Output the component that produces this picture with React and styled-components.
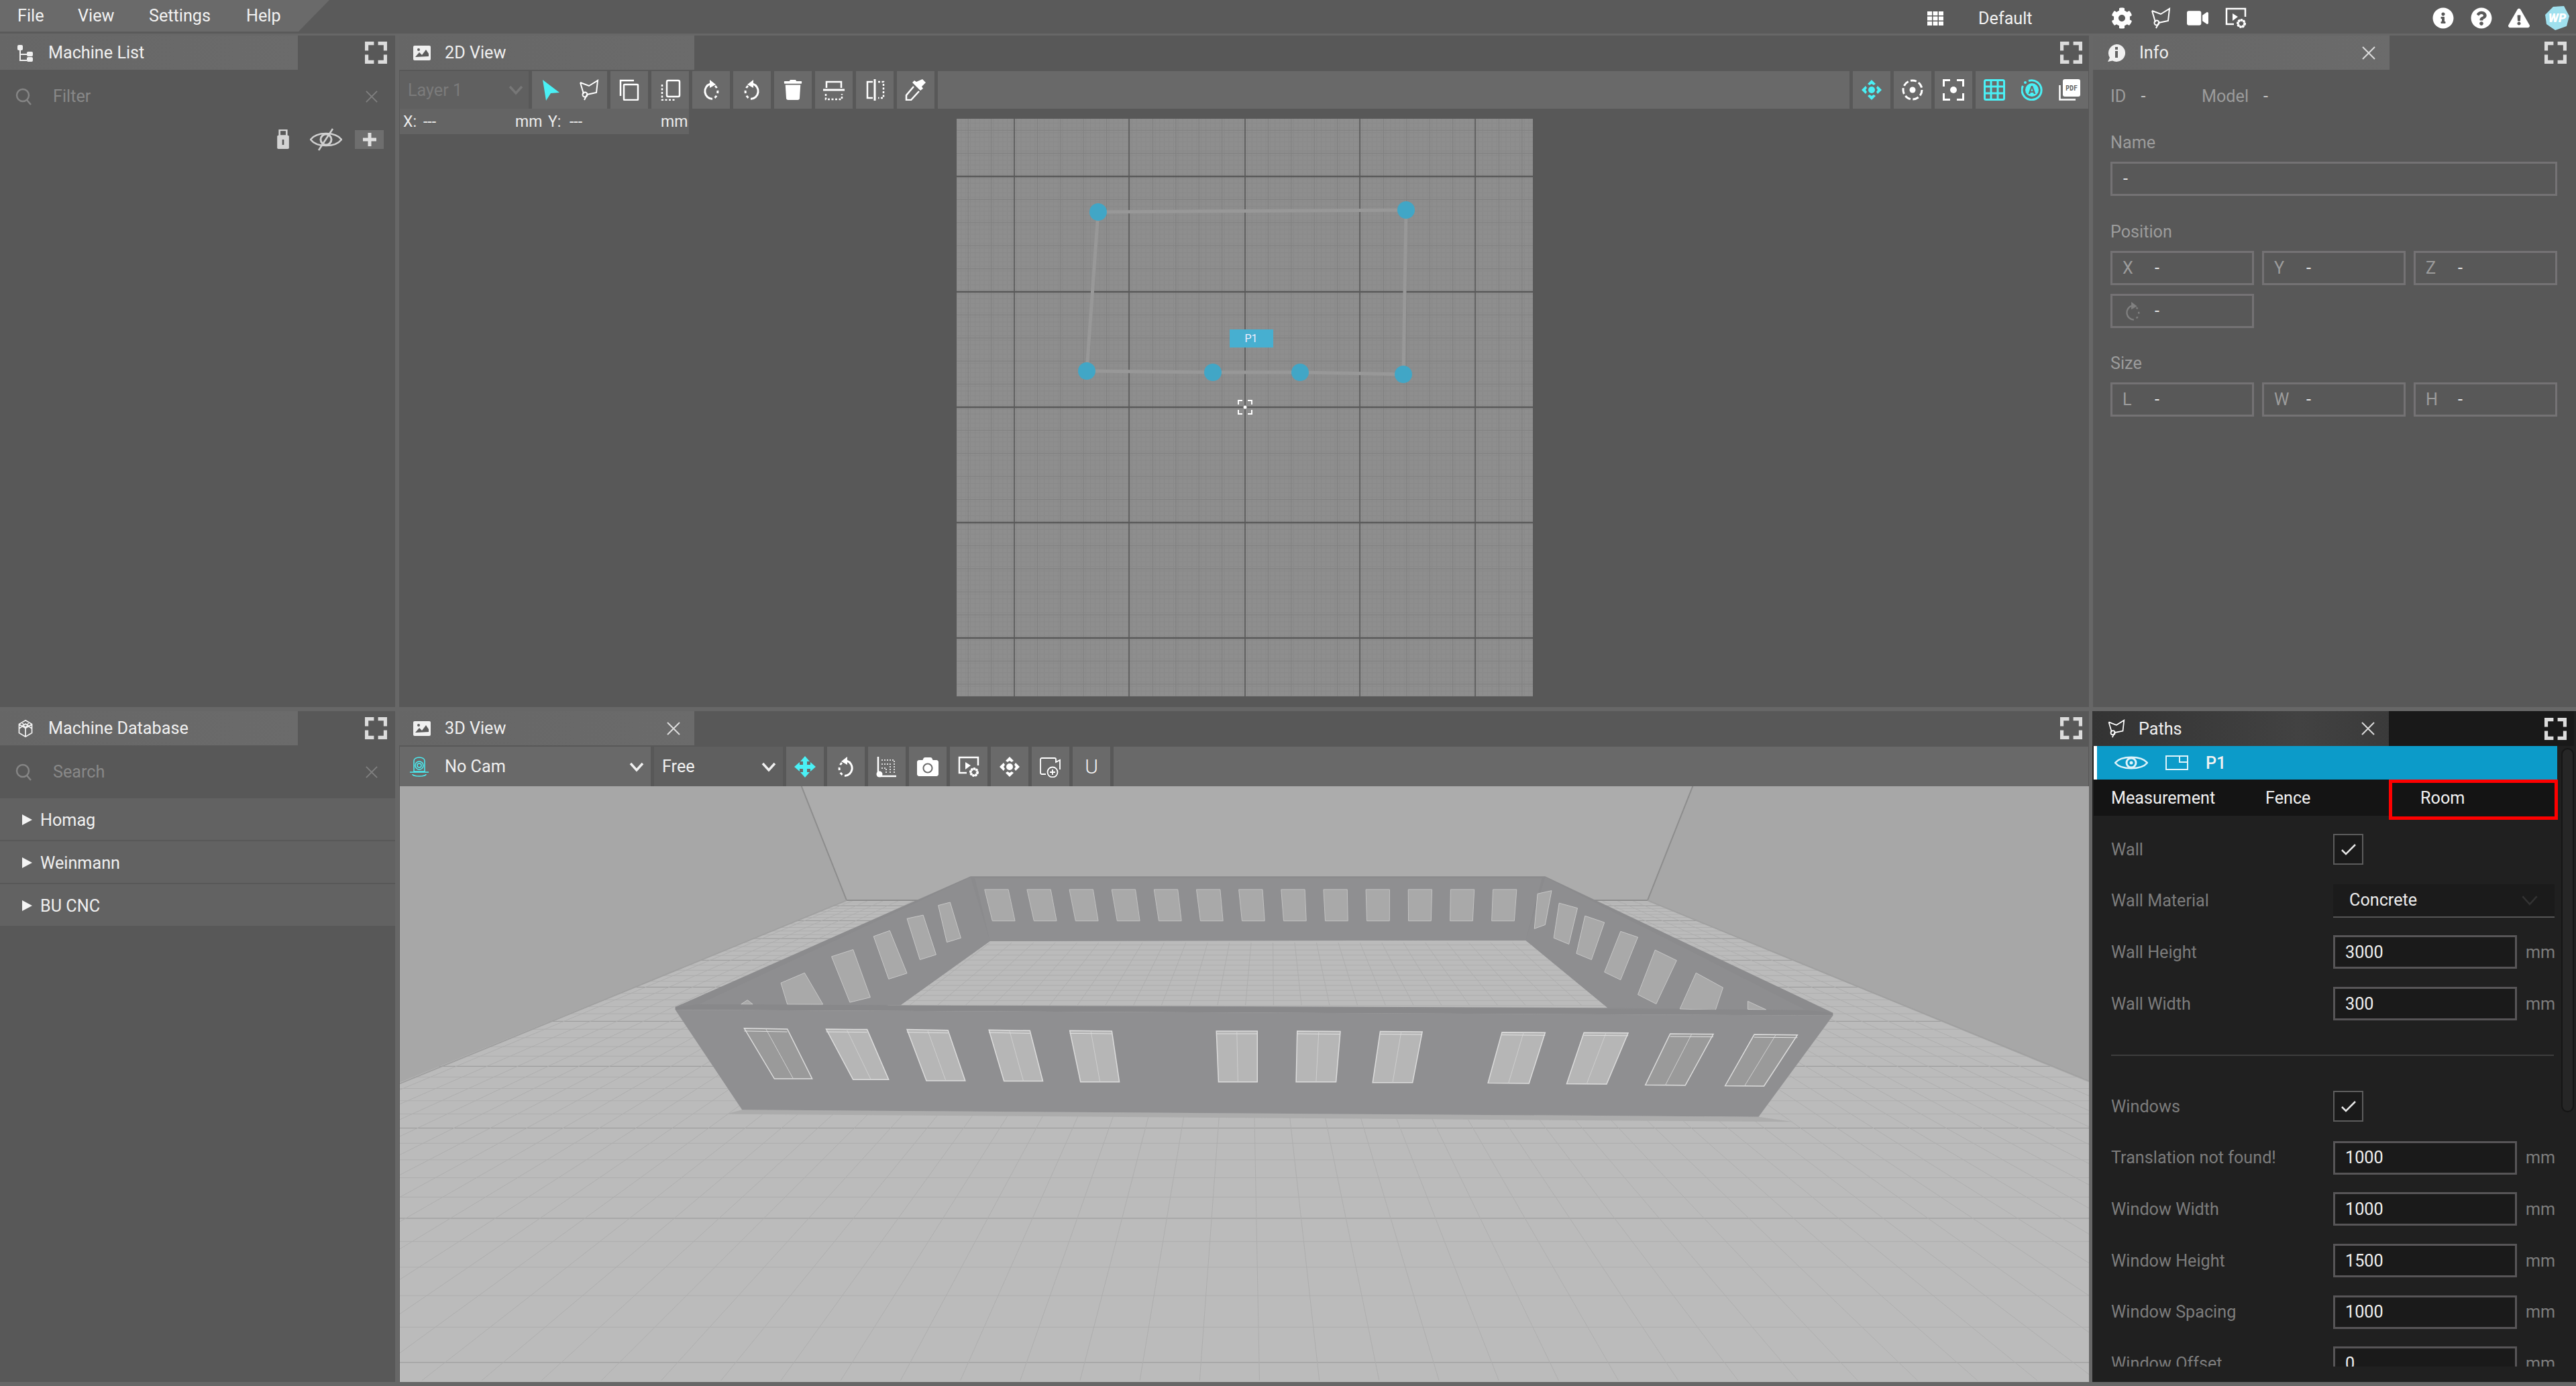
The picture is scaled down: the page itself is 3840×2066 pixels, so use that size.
import React from 'react';
import styled, {createGlobalStyle} from 'styled-components';
import {FaCog, FaVideo, FaCamera, FaInfoCircle, FaQuestionCircle, FaExclamationTriangle, FaTrash} from 'react-icons/fa';

const GlobalStyle = createGlobalStyle`
	html, body {
		margin: 0;
		padding: 0;
		background: #585858;
	}
	* {
		box-sizing: border-box;
	}
	body {
		font-family: Roboto, 'Liberation Sans', sans-serif;
		font-size: 25.2px;
		color: #e6e6e6;
		overflow: hidden;
	}
`;

const CYAN = '#4af0f5';

function Svg({size = 32, color = '#fff', children, vb = '0 0 32 32'}) {
	return (
		<IconSvg viewBox={vb} $size={size} $color={color}>
			{children}
		</IconSvg>
	);
}

function Fullscreen() {
	return (
		<Svg size={33} color="#dcdcdc">
			<path d="M2.5 13V2.5H13M19 2.5h10.5V13M2.5 19v10.5H13M29.5 19v10.5H19" fill="none" stroke="currentColor" strokeWidth="5" />
		</Svg>
	);
}

function CloseX({size = 20, color = '#dcdcdc'}) {
	return (
		<Svg size={size} color={color} vb="0 0 20 20">
			<path d="M1 1l18 18M19 1L1 19" stroke="currentColor" strokeWidth="2" fill="none" />
		</Svg>
	);
}

function SearchGlass() {
	return (
		<Svg size={26} color="#858585" vb="0 0 26 26">
			<circle cx="11" cy="11" r="9" fill="none" stroke="currentColor" strokeWidth="2.5" />
			<path d="M17 18l6 7" stroke="currentColor" strokeWidth="2.5" />
		</Svg>
	);
}

function TreeIcon() {
	return (
		<Svg size={26} color="#f0f0f0" vb="0 0 26 26">
			<path d="M5 8v16h10M5 15h10" fill="none" stroke="currentColor" strokeWidth="2" />
			<rect x="1" y="1" width="8" height="8" rx="2" fill="currentColor" />
			<rect x="15" y="11" width="9" height="7" rx="2" fill="currentColor" />
			<rect x="15" y="19" width="9" height="7" rx="2" fill="currentColor" />
		</Svg>
	);
}

function ImageIcon() {
	return (
		<Svg size={26} color="#f0f0f0" vb="0 0 26 26">
			<rect x="0" y="2" width="26" height="22" rx="2" fill="currentColor" />
			<path d="M3 19l6-7 4 4 6-8 4 6v4z" fill="#5c5c5c" />
			<circle cx="8" cy="8" r="2" fill="#5c5c5c" />
		</Svg>
	);
}

function ChatInfoIcon() {
	return (
		<Svg size={28} color="#f0f0f0" vb="0 0 28 28">
			<path d="M14 1a13 13 0 1 1-6 24.5L1 27l3-6A13 13 0 0 1 14 1z" fill="currentColor" />
			<rect x="12" y="11" width="4" height="10" fill="#626262" />
			<rect x="12" y="5" width="4" height="4" fill="#626262" />
		</Svg>
	);
}

function CubeIcon() {
	return (
		<Svg size={26} color="#f0f0f0" vb="0 0 26 30">
			<path d="M13 1l11 6.5v15L13 29 2 22.5v-15zM2 7.500l11 7 11-7M13 14.500V29M7 4l6 10 6-10M2 15l11-8 11 8" fill="none" stroke="currentColor" strokeWidth="2" />
		</Svg>
	);
}

function PathIcon({color = '#fff', size = 32}) {
	return (
		<Svg size={size} color={color}>
			<path d="M4 5l13 5 13-8-2 18-14 3-4 8M4 5l5 17" fill="none" stroke="currentColor" strokeWidth="2" />
			<circle cx="11" cy="23" r="3.500" fill="none" stroke="currentColor" strokeWidth="2" />
		</Svg>
	);
}

const ToolIcons = {
	arrow: () => (
		<Svg color={CYAN}>
			<path d="M4 1l25 19-13 1-7 11z" fill="currentColor" />
		</Svg>
	),
	path: () => <PathIcon />,
	copy: () => (
		<Svg>
			<path d="M3 25V2h20" fill="none" stroke="currentColor" strokeWidth="2.500" />
			<rect x="8" y="8" width="21" height="23" rx="1" fill="none" stroke="currentColor" strokeWidth="2.500" />
		</Svg>
	),
	copyDashed: () => (
		<Svg>
			<rect x="11" y="2" width="19" height="24" rx="2" fill="none" stroke="currentColor" strokeWidth="2.500" />
			<path d="M4 8v23h20" fill="none" stroke="currentColor" strokeWidth="2.500" strokeDasharray="3 2.500" />
		</Svg>
	),
	rotateCw: () => (
		<Svg>
			<path d="M18 29.500A11.500 11.500 0 0 1 15 7" fill="none" stroke="currentColor" strokeWidth="3" />
			<path d="M14 1l9 7-9 5z" fill="currentColor" />
			<path d="M22 10A11.500 11.500 0 0 1 21 28" fill="none" stroke="currentColor" strokeWidth="3" strokeDasharray="4 4" />
		</Svg>
	),
	rotateCcw: () => (
		<Svg>
			<g transform="matrix(-1 0 0 1 32 0)">
				<path d="M18 29.500A11.500 11.500 0 0 1 15 7" fill="none" stroke="currentColor" strokeWidth="3" />
				<path d="M14 1l9 7-9 5z" fill="currentColor" />
				<path d="M22 10A11.500 11.500 0 0 1 21 28" fill="none" stroke="currentColor" strokeWidth="3" strokeDasharray="4 4" />
			</g>
		</Svg>
	),
	trash: () => <FaTrash size={30} color="#fff" />,
	flipV: () => (
		<Svg>
			<path d="M5 13V4h22v9" fill="none" stroke="currentColor" strokeWidth="2.500" />
			<path d="M0 16h32" stroke="currentColor" strokeWidth="3" />
			<path d="M4 22v8h24v-8" fill="none" stroke="currentColor" strokeWidth="2.500" strokeDasharray="3 2.500" />
		</Svg>
	),
	flipH: () => (
		<Svg>
			<path d="M13 4H5v24h8" fill="none" stroke="currentColor" strokeWidth="2.500" />
			<path d="M16 0v32" stroke="currentColor" strokeWidth="3" />
			<path d="M21 4h8v24h-8" fill="none" stroke="currentColor" strokeWidth="2.500" strokeDasharray="3 2.500" />
		</Svg>
	),
	dropper: () => (
		<Svg>
			<path d="M26 0l5 5-6 6 2 3-4 3-12-12 3-3 3 2z" fill="currentColor" />
			<path d="M13 11L2 24v7h7l12-13" fill="none" stroke="currentColor" strokeWidth="2.500" />
		</Svg>
	),
	moveSmall: ({color = '#fff'}) => (
		<Svg color={color}>
			<circle cx="16" cy="16" r="5" fill="currentColor" />
			<path d="M16 1l6 6-3 2-3-2-3 2-3-2zM16 31l6-6-3-2-3 2-3-2-3 2zM1 16l6-6 2 3-2 3 2 3-2 3zM31 16l-6-6-2 3 2 3-2 3 2 3z" fill="currentColor" />
		</Svg>
	),
	orbit: () => (
		<Svg>
			<circle cx="16" cy="16" r="14" fill="none" stroke="currentColor" strokeWidth="3" strokeDasharray="9 3.500" />
			<circle cx="16" cy="16" r="4.500" fill="currentColor" />
		</Svg>
	),
	focus: () => (
		<Svg>
			<path d="M1.500 11V1.500H11M21 1.500h9.500V11M1.500 21v9.500H11M30.500 21v9.500H21" fill="none" stroke="currentColor" strokeWidth="3" />
			<circle cx="16" cy="16" r="5" fill="currentColor" />
		</Svg>
	),
	grid: () => (
		<Svg color={CYAN}>
			<rect x="1.500" y="1.500" width="29" height="29" rx="2" fill="none" stroke="currentColor" strokeWidth="3" />
			<path d="M11 1v30M21 1v30M1 11h30M1 21h30" stroke="currentColor" strokeWidth="3" />
		</Svg>
	),
	auto: () => (
		<Svg color={CYAN}>
			<path d="M11 2.500A14.500 14.500 0 1 1 2.500 10" fill="none" stroke="currentColor" strokeWidth="3" />
			<circle cx="16" cy="16" r="10" fill="currentColor" />
			<circle cx="6" cy="5" r="2" fill="currentColor" />
			<AutoLetter x="16" y="22">A</AutoLetter>
		</Svg>
	),
	pdf: () => (
		<Svg>
			<path d="M1.500 9v21.500H25" fill="none" stroke="currentColor" strokeWidth="2.500" />
			<rect x="6" y="0" width="26" height="26" rx="3" fill="currentColor" />
			<PdfLetter x="19" y="17">PDF</PdfLetter>
		</Svg>
	),
	moveBig: () => (
		<Svg color={CYAN}>
			<path d="M16 0l7 8h-4v5h5V9l8 7-8 7v-4h-5v5h4l-7 8-7-8h4v-5H8v4l-8-7 8-7v4h5V8H9z" fill="currentColor" />
		</Svg>
	),
	scale: () => (
		<Svg>
			<path d="M3 26V1M6 30h24" stroke="currentColor" strokeWidth="2.500" />
			<circle cx="5" cy="27" r="4.500" fill="currentColor" />
			<path d="M8 6h19v20M8 12h13v14M8 18h7v8" fill="none" stroke="currentColor" strokeWidth="1.500" strokeDasharray="2 2" />
		</Svg>
	),
	camera: () => <FaCamera size={32} color="#fff" />,
	playSettings: () => (
		<Svg>
			<path d="M13 25H2V2h28v12" fill="none" stroke="currentColor" strokeWidth="2.500" />
			<path d="M11 9l8 5-8 6z" fill="currentColor" />
			<circle cx="24" cy="24" r="5" fill="none" stroke="currentColor" strokeWidth="4" strokeDasharray="2.500 1.200" />
			<circle cx="24" cy="24" r="5" fill="none" stroke="currentColor" strokeWidth="2" />
		</Svg>
	),
	addCamera: () => (
		<Svg>
			<path d="M9 27H3a2 2 0 0 1-2-2V5a2 2 0 0 1 2-2h19a2 2 0 0 1 2 2v4l6-3v14" fill="none" stroke="currentColor" strokeWidth="1.800" />
			<circle cx="19" cy="24" r="7.500" fill="none" stroke="currentColor" strokeWidth="1.800" />
			<path d="M19 20v8M15 24h8" stroke="currentColor" strokeWidth="1.800" />
		</Svg>
	),
};

function WebcamIcon() {
	return (
		<Svg size={32} color={CYAN}>
			<path d="M8 7a8 5 0 0 1 16 0v16H8z" fill="none" stroke="currentColor" strokeWidth="1.500" />
			<circle cx="16" cy="14" r="6" fill="none" stroke="currentColor" strokeWidth="1.500" />
			<circle cx="16" cy="14" r="3" fill="none" stroke="currentColor" strokeWidth="1.500" />
			<path d="M2 24h28M6 27a10 3 0 0 0 20 0" fill="none" stroke="currentColor" strokeWidth="1.500" />
		</Svg>
	);
}

function Chevron({color = '#f0f0f0', size = 22, weight = 3.5}) {
	return (
		<Svg size={size} color={color} vb="0 0 22 14">
			<path d="M2 2l9 10 9-10" fill="none" stroke="currentColor" strokeWidth={weight} />
		</Svg>
	);
}

function Check() {
	return (
		<Svg size={22} color="#e8e8e8" vb="0 0 22 18">
			<path d="M1 10l6 6L21 2" fill="none" stroke="currentColor" strokeWidth="2.500" />
		</Svg>
	);
}

function PanelHeader({icon, title, onClose, dark, tabWidth = 440, tabPad = 20, endPad = 10}) {
	return (
		<HeaderBar $dark={dark} $end={endPad}>
			<Tab $dark={dark} $w={tabWidth} $pad={tabPad}>
				<TabIcon>{icon}</TabIcon>
				<TabTitle>{title}</TabTitle>
				{onClose && (
					<TabClose>
						<CloseX />
					</TabClose>
				)}
			</Tab>
			<FullscreenSlot>
				<Fullscreen />
			</FullscreenSlot>
		</HeaderBar>
	);
}

function SearchRow({placeholder}) {
	return (
		<SearchBar>
			<SearchGlass />
			<SearchText>{placeholder}</SearchText>
			<SearchClear>
				<CloseX color="#808080" size={18} />
			</SearchClear>
		</SearchBar>
	);
}

function ToolButton({name, wide, color}) {
	const Ico = ToolIcons[name];
	return (
		<ToolBtn $wide={wide}>
			<Ico color={color} />
		</ToolBtn>
	);
}

const MAJOR_X = [86, 257, 430, 601, 773];
const MAJOR_Y = [86, 258, 430, 602, 774];
const NODES = [
	[211, 139],
	[670, 136],
	[666, 381],
	[512, 378],
	[382, 378],
	[194, 376],
];

function range(from, to, step) {
	const out = [];
	for (let v = from; v <= to; v += step) out.push(v);
	return out;
}

function Plan() {
	const minor = range(17.2, 860, 34.4);
	const fine = range(0, 860, 6.88);
	return (
		<PlanSvg viewBox="0 0 859 861">
			{fine.map(v => (
				<g key={v} stroke="#8a8a8a" strokeWidth="1">
					<line x1={v} y1="0" x2={v} y2="861" />
					<line x1="0" y1={v} x2="859" y2={v} />
				</g>
			))}
			{minor.map(v => (
				<g key={v} stroke="#808080" strokeWidth="1">
					<line x1={v} y1="0" x2={v} y2="861" />
					<line x1="0" y1={v} x2="859" y2={v} />
				</g>
			))}
			{MAJOR_X.map(v => (
				<line key={v} x1={v} y1="0" x2={v} y2="861" stroke="#565656" strokeWidth="1.500" />
			))}
			{MAJOR_Y.map(v => (
				<line key={v} x1="0" y1={v} x2="859" y2={v} stroke="#5a5a5a" strokeWidth="2.500" />
			))}
			<polygon points={NODES.map(p => p.join(',')).join(' ')} fill="none" stroke="#989898" strokeWidth="5" />
			{NODES.map(([x, y]) => (
				<circle key={x} cx={x} cy={y} r="13" fill="#41a6c6" />
			))}
			<g transform="translate(419 419)" stroke="#fff" strokeWidth="2" fill="none">
				<path d="M1 7V1h6M15 1h6v6M1 15v6h6M21 15v6h-6" />
				<circle cx="11" cy="11" r="2.500" fill="#fff" stroke="none" />
			</g>
		</PlanSvg>
	);
}

const BACK_WINDOWS = range(0, 12, 1);
const FRONT_WINDOWS = [
	[317, 645, 357, 647, 380, 775, 345, 775],
	[393, 647, 431, 648, 451, 777, 418, 777],
	[468, 648, 506, 650, 522, 780, 486, 780],
	[544, 649, 582, 651, 594, 781, 558, 781],
	[619, 651, 658, 652, 665, 783, 629, 783],
	[755, 652, 793, 652, 793, 783, 757, 783],
	[830, 652, 870, 653, 866, 783, 829, 783],
	[907, 653, 946, 654, 937, 785, 900, 785],
	[1020, 655, 1060, 656, 1045, 787, 1007, 786],
	[1096, 656, 1137, 657, 1117, 789, 1080, 788],
	[1176, 659, 1216, 660, 1190, 792, 1153, 791],
	[1254, 661, 1294, 662, 1263, 794, 1227, 793],
];
const SIDE_WINDOWS = [
	'497,328 508,320 518,412 505,423',
	'468,362 483,353 495,455 480,468',
	'437,408 452,393 468,503 451,518',
	'398,460 418,442 434,565 415,578',
	'351,528 373,502 390,583 357,583',
	'314,583 320,572 325,583',
	'1053,298 1066,290 1060,378 1050,388',
	'1073,322 1090,335 1082,428 1068,412',
	'1097,355 1115,372 1103,468 1089,452',
	'1130,395 1146,410 1130,520 1115,500',
	'1162,443 1182,470 1163,582 1146,558',
	'1200,502 1225,540 1218,598 1185,595',
	'1248,575 1265,597 1248,596',
];

const VP = [783.5, -109];

function floorLines() {
	const rows = [];
	for (let n = 0; n < 60; n++) {
		const y = 1 / (0.002358 - n * 0.000037) - 109;
		if (y > 1560 || y < 0) break;
		rows.push(y);
	}
	const cols = range(-4200, 5800, 55.5);
	return {rows, cols};
}

function Room() {
	const {rows, cols} = floorLines();
	const line = {vectorEffect: 'non-scaling-stroke'};
	return (
		<RoomSvg viewBox="-2.500 20.800 1567 1536" preserveAspectRatio="none">
			<defs>
				<clipPath id="floorClip">
					<polygon points="412,315 1155,315 1568,785 1568,1560 -3,1560 -3,785" />
				</clipPath>
			</defs>
			<rect x="-3" y="20" width="1572" height="1540" fill="#a7a7a7" />
			<polygon points="370,20 1197,20 1155,315 412,315" fill="#acacac" />
			<polygon points="412,315 1155,315 1568,785 1568,1560 -3,1560 -3,785" fill="#bbbbbb" />
			<g clipPath="url(#floorClip)">
				{rows.map((y, i) => (
					<line key={y} {...line} x1="-3" y1={y} x2="1568" y2={y} stroke={i % 5 === 2 ? '#989898' : '#aeaeae'} strokeWidth="1" />
				))}
				{cols.map(x => (
					<line key={x} {...line} x1={VP[0]} y1={VP[1]} x2={x} y2="1553" stroke="#aeaeae" strokeWidth="1" />
				))}
			</g>
			<g stroke="#8d8d8d" strokeWidth="2" fill="none">
				<path {...line} d="M370 20L412 315H1155L1197 20" />
				<path {...line} d="M412 315L-3 788M1155 315L1568 785" stroke="#a0a0a0" />
			</g>
			<polygon points="315,855 1258,873 1290,886 300,866" fill="#acacac" />
			<polygon points="527,253 1060,253 1327,605 253,590" fill="#8b8b8d" />
			<polygon points="545,420 1042,418 1118,592 462,585" fill="#bbbbbb" />
			{range(430, 590, 13).map(y => (
				<line key={y} {...line} x1="450" y1={y} x2="1130" y2={y} stroke="#aeaeae" strokeWidth="1" />
			))}
			{range(470, 1110, 26).map(x => (
				<line key={x} {...line} x1={545 + ((x - 470) / 640) * 497} y1="424" x2={x} y2="586" stroke="#aeaeae" strokeWidth="1" />
			))}
			<polygon points="531,258 1057,258 1042,418 545,420" fill="#8f8f91" />
			<polygon points="527,255 545,420 462,585 275,583" fill="#8e8e90" />
			<polygon points="1060,255 1042,418 1118,592 1302,598" fill="#8e8e90" />
			{BACK_WINDOWS.map(i => {
				const x = 540 + i * 39.3;
				const lean = (6 - i) * 0.7;
				return (
					<polygon
						key={i}
						{...line}
						points={`${x},287 ${x + 22},287 ${x + 24 + lean},368 ${x + 3 + lean},368`}
						fill="#a9a9a9"
						stroke="#c2c2c2"
						strokeWidth="1"
					/>
				);
			})}
			{SIDE_WINDOWS.map(p => (
				<polygon key={p} {...line} points={p} fill="#a9a9a9" stroke="#c8c8c8" strokeWidth="1" />
			))}
			<polygon points="253,597 1327,612 1258,873 315,855" fill="#8f8f91" />
			<polygon points="253,590 275,583 1302,598 1327,605 1327,612 253,597" fill="#88888a" />
			{FRONT_WINDOWS.map((w, i) => {
				const [a, b, c, d, e, f, g, h] = w;
				const mx = (a + c) / 2;
				const bx = (e + g) / 2;
				const dark = i === 0 || i === 11 || i === 10;
				return (
					<g key={a}>
						<polygon {...line} points={w.join(',')} fill={dark ? '#9a9a9a' : '#b6b6b6'} stroke="#dcdcdc" strokeWidth="1.500" />
						<line {...line} x1={mx} y1={(b + d) / 2} x2={bx} y2={(f + h) / 2} stroke="#cfcfcf" strokeWidth="1" />
						<line {...line} x1={a} y1={b + 7} x2={c} y2={d + 7} stroke="#e0e0e0" strokeWidth="1" />
					</g>
				);
			})}
		</RoomSvg>
	);
}

const ROOM_ROWS = [
	{label: 'Wall', check: true},
	{label: 'Wall Material', select: 'Concrete'},
	{label: 'Wall Height', value: '3000'},
	{label: 'Wall Width', value: '300'},
	{divider: true},
	{label: 'Windows', check: true},
	{label: 'Translation not found!', value: '1000'},
	{label: 'Window Width', value: '1000'},
	{label: 'Window Height', value: '1500'},
	{label: 'Window Spacing', value: '1000'},
	{label: 'Window Offset', value: '0'},
];

function RoomRow({row}) {
	if (row.divider) {
		return (
			<FormRow>
				<Divider />
			</FormRow>
		);
	}
	return (
		<FormRow>
			<FormLabel>{row.label}</FormLabel>
			{row.check && (
				<CheckBox>
					<Check />
				</CheckBox>
			)}
			{row.select && (
				<SelectBox>
					{row.select}
					<SelectArrow>
						<Chevron color="#333" size={26} weight={2} />
					</SelectArrow>
				</SelectBox>
			)}
			{row.value && (
				<>
					<ValueBox>{row.value}</ValueBox>
					<Unit>mm</Unit>
				</>
			)}
		</FormRow>
	);
}

function InfoField({label, children}) {
	return (
		<Field>
			<FieldKey>{label}</FieldKey>
			<FieldValue>{children}</FieldValue>
		</Field>
	);
}

export default function App() {
	return (
		<Page>
			<GlobalStyle />
			<TopBar>
				<MenuTab>
					<MenuItem $w={90}>File</MenuItem>
					<MenuItem $w={106}>View</MenuItem>
					<MenuItem $w={145}>Settings</MenuItem>
					<MenuItem $w={60}>Help</MenuItem>
				</MenuTab>
				<TopRight>
					<LayoutIcon>
						<Svg size={24} vb="0 0 24 24">
							<path d="M0 2h7v6H0zM8.500 2h7v6h-7zM17 2h7v6h-7zM0 9.500h7v6H0zM8.500 9.500h7v6h-7zM17 9.500h7v6h-7zM0 17h7v6H0zM8.500 17h7v6h-7zM17 17h7v6h-7z" fill="currentColor" />
						</Svg>
					</LayoutIcon>
					<LayoutName>Default</LayoutName>
					<TopIcons>
						<FaCog size={32} color="#fff" />
						<PathIcon />
						<FaVideo size={32} color="#fff" />
						<ToolIcons.playSettings />
					</TopIcons>
					<TopIcons $left={253}>
						<FaInfoCircle size={32} color="#fff" />
						<FaQuestionCircle size={32} color="#fff" />
						<FaExclamationTriangle size={32} color="#fff" />
						<Logo viewBox="0 0 38 38">
							<polygon points="13,2 29,1 37,16 33,31 16,37 3,28 1,14" fill="#9fe0ee" />
							<LogoText x="19" y="25">
								WP
							</LogoText>
						</Logo>
					</TopIcons>
				</TopRight>
			</TopBar>

			<Workspace>
				<Panel>
					<PanelHeader icon={<TreeIcon />} title="Machine List" tabWidth={444} tabPad={24} endPad={12} />
					<SearchRow placeholder="Filter" />
					<ListActions>
						<Svg size={30} color="#d4d4d4" vb="0 0 24 34">
							<rect x="6" y="1" width="12" height="10" fill="none" stroke="currentColor" strokeWidth="3" />
							<rect x="2" y="10" width="20" height="23" rx="2" fill="currentColor" />
							<rect x="10.500" y="17" width="3" height="9" fill="#585858" />
						</Svg>
						<Svg size={48} color="#cfcfcf" vb="0 0 48 34">
							<path d="M1 17C10 5 38 5 47 17 38 29 10 29 1 17z" fill="none" stroke="currentColor" strokeWidth="2.500" />
							<circle cx="24" cy="17" r="8" fill="none" stroke="currentColor" strokeWidth="3" />
							<path d="M34 1L13 33" stroke="currentColor" strokeWidth="2.500" />
						</Svg>
						<FolderPlus>
							<Svg size={22} color="#e0e0e0" vb="0 0 22 22">
								<path d="M11 1v20M1 11h20" stroke="currentColor" strokeWidth="5" />
							</Svg>
						</FolderPlus>
					</ListActions>
				</Panel>

				<Panel>
					<PanelHeader icon={<ImageIcon />} title="2D View" />
					<Toolbar>
						<LayerSelect>
							Layer 1
							<Chevron color="#777" />
						</LayerSelect>
						<ToolBtn $wide>
							<ToolIcons.arrow />
							<ToolIcons.path />
						</ToolBtn>
						{['copy', 'copyDashed', 'rotateCw', 'rotateCcw', 'trash', 'flipV', 'flipH', 'dropper'].map(name => (
							<ToolButton key={name} name={name} />
						))}
						<ToolFiller />
						<ToolButton name="moveSmall" color={CYAN} />
						<ToolButton name="orbit" />
						<ToolButton name="focus" />
						<ToolGroup>
							<ToolIcons.grid />
							<ToolIcons.auto />
							<ToolIcons.pdf />
						</ToolGroup>
					</Toolbar>
					<CoordBar>
						<CoordCell $w={30}>X:</CoordCell>
						<CoordCell $w={137}>---</CoordCell>
						<CoordCell $w={49}>mm</CoordCell>
						<CoordCell $w={32}>Y:</CoordCell>
						<CoordCell $w={136}>---</CoordCell>
						<CoordCell>mm</CoordCell>
					</CoordBar>
					<PlanArea>
						<PlanCanvas>
							<Plan />
							<PathTag>P1</PathTag>
						</PlanCanvas>
					</PlanArea>
				</Panel>

				<Panel>
					<PanelHeader icon={<ChatInfoIcon />} title="Info" onClose tabWidth={442} tabPad={21} endPad={14} />
					<InfoBody>
						<IdLine>
							<IdPair $w={136}>
								ID<IdDash $gap={22}>-</IdDash>
							</IdPair>
							<IdPair>
								Model<IdDash $gap={22}>-</IdDash>
							</IdPair>
						</IdLine>
						<SectionLabel $top={41}>Name</SectionLabel>
						<NameBox>-</NameBox>
						<SectionLabel $top={40}>Position</SectionLabel>
						<FieldGrid>
							<InfoField label="X">-</InfoField>
							<InfoField label="Y">-</InfoField>
							<InfoField label="Z">-</InfoField>
							<InfoField
								label={
									<Svg size={30} color="#808080">
										<path d="M18 29.500A11.500 11.500 0 0 1 15 7" fill="none" stroke="currentColor" strokeWidth="2.500" />
										<path d="M14 1l9 7-9 5z" fill="currentColor" />
										<path d="M22 10A11.500 11.500 0 0 1 21 28" fill="none" stroke="currentColor" strokeWidth="2.500" strokeDasharray="3 5" />
									</Svg>
								}
							>
								-
							</InfoField>
						</FieldGrid>
						<SectionLabel $top={39}>Size</SectionLabel>
						<FieldGrid>
							<InfoField label="L">-</InfoField>
							<InfoField label="W">-</InfoField>
							<InfoField label="H">-</InfoField>
						</FieldGrid>
					</InfoBody>
				</Panel>

				<Panel>
					<PanelHeader icon={<CubeIcon />} title="Machine Database" tabWidth={444} tabPad={24} endPad={12} />
					<SearchRow placeholder="Search" />
					{['Homag', 'Weinmann', 'BU CNC'].map(name => (
						<TreeRow key={name}>
							<TreeCaret />
							{name}
						</TreeRow>
					))}
				</Panel>

				<Panel>
					<PanelHeader icon={<ImageIcon />} title="3D View" onClose />
					<Toolbar $tall>
						<CamSelect $w={374} $on>
							<WebcamIcon />
							<CamName>No Cam</CamName>
							<Chevron />
						</CamSelect>
						<CamSelect $w={192}>
							<FreeName>Free</FreeName>
							<Chevron />
						</CamSelect>
						<ToolButton name="moveBig" />
						<ToolButton name="rotateCcw" />
						<ToolButton name="scale" />
						<ToolButton name="camera" />
						<ToolButton name="playSettings" />
						<ToolButton name="moveSmall" />
						<ToolButton name="addCamera" />
						<ToolBtn>
							<SnapLetter>U</SnapLetter>
						</ToolBtn>
						<ToolFiller />
					</Toolbar>
					<RoomView>
						<Room />
					</RoomView>
				</Panel>

				<PathsPanel>
					<PanelHeader icon={<PathIcon size={28} />} title="Paths" onClose dark tabWidth={442} tabPad={21} endPad={11} />
					<PathsInner>
						<PathRow>
							<Svg size={50} color="#dff3fa" vb="0 0 50 26">
								<path d="M1 13C10 2 40 2 49 13 40 24 10 24 1 13z" fill="none" stroke="currentColor" strokeWidth="2.500" />
								<circle cx="25" cy="13" r="7" fill="none" stroke="currentColor" strokeWidth="3" />
								<circle cx="25" cy="13" r="2.500" fill="currentColor" />
							</Svg>
							<Svg size={34} color="#dff3fa" vb="0 0 34 22">
								<path d="M1 1h32v20H1zM21 1v9h12" fill="none" stroke="currentColor" strokeWidth="2" />
							</Svg>
							<PathName>P1</PathName>
						</PathRow>
						<ModeTabs>
							<ModeTab $w={229} $pad={26}>Measurement</ModeTab>
							<ModeTab $w={211} $pad={27}>Fence</ModeTab>
							<RoomTab>Room</RoomTab>
						</ModeTabs>
						<FormScroll>
							{ROOM_ROWS.map((row, i) => (
								<RoomRow key={i} row={row} />
							))}
						</FormScroll>
						<ScrollThumb />
					</PathsInner>
				</PathsPanel>
			</Workspace>
		</Page>
	);
}

const IconSvg = styled.svg`
	display: block;
	flex: none;
	width: ${p => p.$size}px;
	height: ${p => p.$size}px;
	color: ${p => p.$color};
`;

const AutoLetter = styled.text`
	font-family: Roboto, sans-serif;
	font-size: 16px;
	font-weight: 700;
	text-anchor: middle;
	fill: #6a6a6a;
`;

const PdfLetter = styled.text`
	font-family: 'DejaVu Sans Mono', monospace;
	font-size: 10px;
	font-weight: 700;
	text-anchor: middle;
	fill: #666;
`;

const Page = styled.div`
	display: flex;
	flex-direction: column;
	width: 3840px;
	height: 2066px;
	background: #676767;
	overflow: hidden;
`;

const TopBar = styled.header`
	display: flex;
	flex: none;
	justify-content: space-between;
	height: 50px;
	background: #5a5a5a;
`;

const MenuTab = styled.nav`
	display: flex;
	align-items: center;
	width: 491px;
	height: 47px;
	padding-left: 26px;
	background: #6a6a6a;
	clip-path: polygon(0 0, 100% 0, 445px 100%, 0 100%);
	color: #f2f2f2;
`;

const MenuItem = styled.span`
	width: ${p => p.$w}px;
	flex: none;
`;

const TopRight = styled.div`
	display: flex;
	align-items: center;
	padding-top: 4px;
`;

const LayoutIcon = styled.div`
	margin-right: 52px;
`;

const LayoutName = styled.span`
	width: 186px;
	color: #f2f2f2;
`;

const TopIcons = styled.div`
	display: grid;
	grid-auto-flow: column;
	grid-auto-columns: 56.5px;
	justify-items: center;
	align-items: center;
	margin-left: ${p => p.$left || 0}px;
`;

const Logo = styled.svg`
	width: 38px;
	height: 38px;
	flex: none;
`;

const LogoText = styled.text`
	font-family: Roboto, sans-serif;
	font-size: 18px;
	font-weight: 900;
	font-style: italic;
	text-anchor: middle;
	fill: #fff;
`;

const Workspace = styled.main`
	display: grid;
	flex: 1;
	grid-template-columns: 589px 2519px 720px;
	grid-template-rows: 1001px 1000px;
	gap: 6px;
	margin-top: 3px;
`;

const Panel = styled.section`
	display: flex;
	position: relative;
	flex-direction: column;
	min-width: 0;
	background: #585858;
	overflow: hidden;
`;

const HeaderBar = styled.div`
	display: flex;
	flex: none;
	justify-content: space-between;
	align-items: center;
	height: ${p => (p.$dark ? '52px' : '51px')};
	padding-right: ${p => p.$end}px;
	background: ${p => (p.$dark ? '#191919' : '#585858')};
`;

const Tab = styled.div`
	display: flex;
	align-items: center;
	width: ${p => p.$w}px;
	height: 100%;
	padding-left: ${p => p.$pad}px;
	background: ${p => (p.$dark ? 'linear-gradient(90deg, #333, #424242 70%, #3a3a3a)' : 'linear-gradient(90deg, #666, #6b6b6b)')};
	color: #f0f0f0;
`;

const TabIcon = styled.span`
	display: flex;
	justify-content: center;
	width: 28px;
	margin-right: 20px;
`;

const TabTitle = styled.span`
	flex: 1;
`;

const TabClose = styled.span`
	margin-right: 21px;
`;

const FullscreenSlot = styled.div`
	display: flex;
`;

const SearchBar = styled.div`
	display: flex;
	flex: none;
	align-items: center;
	height: 79px;
	padding: 0 26px 0 23px;
`;

const SearchText = styled.span`
	flex: 1;
	margin-left: 30px;
	color: #888;
`;

const SearchClear = styled.span`
	display: flex;
`;

const ListActions = styled.div`
	display: flex;
	justify-content: flex-end;
	align-items: center;
	gap: 25px;
	height: 50px;
	padding-right: 17px;
`;

const FolderPlus = styled.div`
	display: flex;
	justify-content: center;
	align-items: center;
	width: 43px;
	height: 28px;
	margin-left: -6px;
	background: #6e6e6e;
`;

const Toolbar = styled.div`
	display: flex;
	flex: none;
	gap: 5px;
	height: ${p => (p.$tall ? '59px' : '56px')};
	margin-top: 2px;
	padding: 0 1px;
`;

const LayerSelect = styled.div`
	display: flex;
	justify-content: space-between;
	align-items: center;
	width: 192px;
	padding: 0 8px 0 12px;
	background: #606060;
	color: #7b7b7b;
`;

const ToolBtn = styled.div`
	display: flex;
	flex: none;
	justify-content: ${p => (p.$wide ? 'space-around' : 'center')};
	align-items: center;
	width: ${p => (p.$wide ? '112px' : '56px')};
	background: #6a6a6a;
`;

const ToolFiller = styled.div`
	flex: 1;
	background: #696969;
`;

const ToolGroup = styled.div`
	display: flex;
	flex: none;
	justify-content: space-around;
	align-items: center;
	width: 168px;
	background: #6a6a6a;
`;

const CoordBar = styled.div`
	display: flex;
	position: absolute;
	top: 109px;
	left: 1px;
	z-index: 1;
	align-items: center;
	width: 431px;
	height: 38px;
	padding-left: 5px;
	background: #646464;
	color: #ececec;
	font-size: 23px;
`;

const CoordCell = styled.span`
	flex: none;
	width: ${p => (p.$w ? `${p.$w}px` : 'auto')};
`;

const PlanArea = styled.div`
	display: flex;
	flex: 1;
	justify-content: center;
	padding-top: 15px;
	padding-left: 1px;
`;

const PlanCanvas = styled.div`
	position: relative;
	width: 859px;
	height: 861px;
	background: #8e8e8e;
`;

const PlanSvg = styled.svg`
	display: block;
	width: 859px;
	height: 861px;
`;

const PathTag = styled.div`
	display: flex;
	position: absolute;
	top: 314px;
	left: 407px;
	justify-content: center;
	align-items: center;
	width: 65px;
	height: 27px;
	background: #47afd0;
	color: #eef;
	font-size: 16px;
`;

const InfoBody = styled.div`
	display: flex;
	flex-direction: column;
	padding: 26px 28px 0 26px;
	color: #9c9c9c;
`;

const IdLine = styled.div`
	display: flex;
	height: 28px;
	line-height: 28px;
`;

const IdPair = styled.span`
	width: ${p => (p.$w ? `${p.$w}px` : 'auto')};
`;

const IdDash = styled.span`
	margin-left: ${p => p.$gap}px;
	color: #c4c4c4;
`;

const SectionLabel = styled.div`
	height: 28px;
	margin-top: ${p => p.$top}px;
	margin-bottom: 14px;
	line-height: 28px;
`;

const NameBox = styled.div`
	display: flex;
	align-items: center;
	height: 51px;
	padding-left: 16px;
	border: 3px solid #747274;
	color: #e4e4e4;
`;

const FieldGrid = styled.div`
	display: grid;
	grid-template-columns: repeat(3, 214px);
	gap: 13px 12px;
`;

const Field = styled.div`
	display: flex;
	align-items: center;
	height: 51px;
	padding-left: 15px;
	border: 3px solid #747274;
`;

const FieldKey = styled.span`
	display: flex;
	width: 48px;
	color: #9c9c9c;
`;

const FieldValue = styled.span`
	color: #e4e4e4;
`;

const TreeRow = styled.div`
	display: flex;
	flex: none;
	align-items: center;
	height: 62px;
	margin-bottom: 2px;
	padding: 2px 0 0 33px;
	background: #626262;
	color: #f0f0f0;
`;

const TreeCaret = styled.span`
	width: 0;
	height: 0;
	margin-right: 12px;
	border-top: 8px solid transparent;
	border-bottom: 8px solid transparent;
	border-left: 15px solid #f4f4f4;
`;

const CamSelect = styled.div`
	display: flex;
	flex: none;
	align-items: center;
	width: ${p => p.$w}px;
	padding: 0 10px 0 ${p => (p.$on ? '13px' : '12px')};
	background: ${p => (p.$on ? '#696969' : '#5f5f5f')};
	color: #f0f0f0;
`;

const CamName = styled.span`
	flex: 1;
	margin-left: 22px;
`;

const FreeName = styled.span`
	flex: 1;
`;

const SnapLetter = styled.span`
	color: #f4f4f4;
	font-size: 30px;
	font-weight: 300;
`;

const RoomView = styled.div`
	flex: 1;
	min-height: 0;
	margin-left: 1px;
	background: #a7a7a7;
`;

const RoomSvg = styled.svg`
	display: block;
	width: 100%;
	height: 888px;
`;

const PathsPanel = styled(Panel)`
	margin-left: -1px;
	padding-right: 3px;
	background: #202020;
`;

const PathsInner = styled.div`
	display: flex;
	position: relative;
	flex: 1;
	flex-direction: column;
	min-height: 0;
	padding-right: 25px;
	padding-left: 2px;
`;

const PathRow = styled.div`
	display: flex;
	flex: none;
	align-items: center;
	gap: 26px;
	height: 50px;
	padding-left: 26px;
	border-left: 5px solid #fff;
	background: #0c9bc9;
	color: #f2f2f2;
`;

const PathName = styled.span`
	font-weight: 500;
`;

const ModeTabs = styled.div`
	display: flex;
	flex: none;
	align-items: flex-start;
	height: 60px;
`;

const ModeTab = styled.div`
	display: flex;
	align-items: center;
	width: ${p => p.$w}px;
	height: 54px;
	padding-left: ${p => p.$pad}px;
	background: #141414;
	color: #f2f2f2;
`;

const RoomTab = styled.div`
	display: flex;
	flex: 1;
	align-items: center;
	height: 60px;
	margin-right: -1px;
	padding: 0 0 6px 42px;
	border: 5px solid #fe0000;
	background: #141414;
	color: #f2f2f2;
`;

const FormScroll = styled.div`
	flex: none;
	height: 815px;
	padding-top: 6px;
	overflow: hidden;
`;

const FormRow = styled.div`
	display: flex;
	align-items: center;
	height: 76.6px;
	padding-left: 26px;
`;

const FormLabel = styled.span`
	flex: none;
	width: 331px;
	color: #7c7c7c;
	white-space: nowrap;
`;

const CheckBox = styled.span`
	display: flex;
	justify-content: center;
	align-items: center;
	width: 45px;
	height: 46px;
	border: 2px solid #5c5c5c;
	background: #1a1a1a;
`;

const SelectBox = styled.div`
	display: flex;
	justify-content: space-between;
	align-items: center;
	width: 330px;
	height: 50px;
	padding: 0 24px;
	border-bottom: 2px solid #555;
	background: #1b1b1b;
	color: #ededed;
`;

const SelectArrow = styled.span`
	display: flex;
`;

const ValueBox = styled.div`
	display: flex;
	flex: none;
	align-items: center;
	width: 274px;
	height: 50px;
	padding-left: 15px;
	border: 3px solid #575557;
	background: #1a1a1a;
	color: #f0f0f0;
`;

const Unit = styled.span`
	margin-left: 13px;
	color: #7c7c7c;
`;

const Divider = styled.div`
	width: 660px;
	border-top: 2px solid #3d3d3d;
`;

const ScrollThumb = styled.div`
	position: absolute;
	top: 3px;
	right: 0;
	width: 19px;
	height: 543px;
	border: 2px solid #151515;
	border-radius: 10px;
	background: #262626;
`;
